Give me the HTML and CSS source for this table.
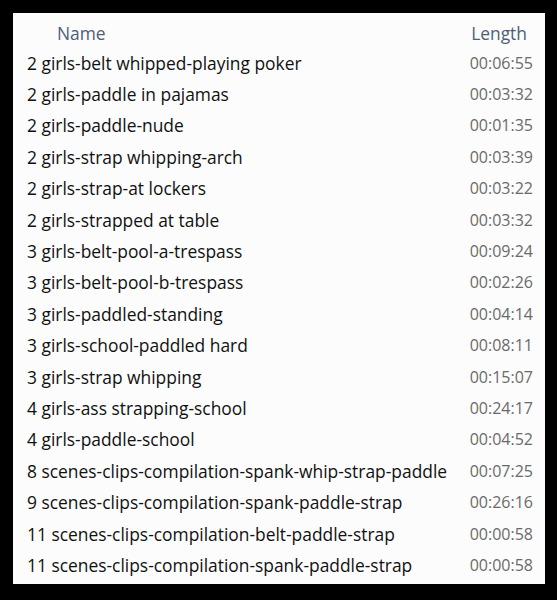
FILE: index.html
```html
<!DOCTYPE html>
<html lang="en">
<head>
    <meta charset="UTF-8">
    <title>Clips</title>
    <link rel="stylesheet" href="styles.css">
</head>
<body>
    <div class="list-view">
        <div class="row header">
            <span class="col-name">Name</span>
            <span class="col-length">Length</span>
        </div>
        <div class="row"><span class="name">2 girls-belt whipped-playing poker</span><span class="length">00:06:55</span></div>
        <div class="row"><span class="name">2 girls-paddle in pajamas</span><span class="length">00:03:32</span></div>
        <div class="row"><span class="name">2 girls-paddle-nude</span><span class="length">00:01:35</span></div>
        <div class="row"><span class="name">2 girls-strap whipping-arch</span><span class="length">00:03:39</span></div>
        <div class="row"><span class="name">2 girls-strap-at lockers</span><span class="length">00:03:22</span></div>
        <div class="row"><span class="name">2 girls-strapped at table</span><span class="length">00:03:32</span></div>
        <div class="row"><span class="name">3 girls-belt-pool-a-trespass</span><span class="length">00:09:24</span></div>
        <div class="row"><span class="name">3 girls-belt-pool-b-trespass</span><span class="length">00:02:26</span></div>
        <div class="row"><span class="name">3 girls-paddled-standing</span><span class="length">00:04:14</span></div>
        <div class="row"><span class="name">3 girls-school-paddled hard</span><span class="length">00:08:11</span></div>
        <div class="row"><span class="name">3 girls-strap whipping</span><span class="length">00:15:07</span></div>
        <div class="row"><span class="name">4 girls-ass strapping-school</span><span class="length">00:24:17</span></div>
        <div class="row"><span class="name">4 girls-paddle-school</span><span class="length">00:04:52</span></div>
        <div class="row"><span class="name">8 scenes-clips-compilation-spank-whip-strap-paddle</span><span class="length">00:07:25</span></div>
        <div class="row"><span class="name">9 scenes-clips-compilation-spank-paddle-strap</span><span class="length">00:26:16</span></div>
        <div class="row"><span class="name">11 scenes-clips-compilation-belt-paddle-strap</span><span class="length">00:00:58</span></div>
        <div class="row"><span class="name">11 scenes-clips-compilation-spank-paddle-strap</span><span class="length">00:00:58</span></div>
    </div>
</body>
</html>
```

FILE: styles.css
```css
* {
    padding: 0;
    margin: 0;
    box-sizing: border-box;
}
body {
    background-color: #000;
    font-family: "Open Sans", Arial, sans-serif;
    font-size: 17.4px;
    width: 557px;
    height: 600px;
    padding: 13px 12px 16px 13px;
}
.list-view {
    background-color: #fcfcfc;
    width: 532px;
    height: 571px;
    padding: 6px 12px 0 14px;
}
.row {
    display: flex;
    justify-content: space-between;
    align-items: center;
    height: 31.4px;
}
.header {
    height: 28px;
    color: #4d5f78;
}
.col-name {
    margin-left: 30px;
}
.col-length {
    margin-right: 6px;
}
.name {
    color: #111;
}
.length {
    color: #6a6a6a;
    font-size: 16px;
}
```
